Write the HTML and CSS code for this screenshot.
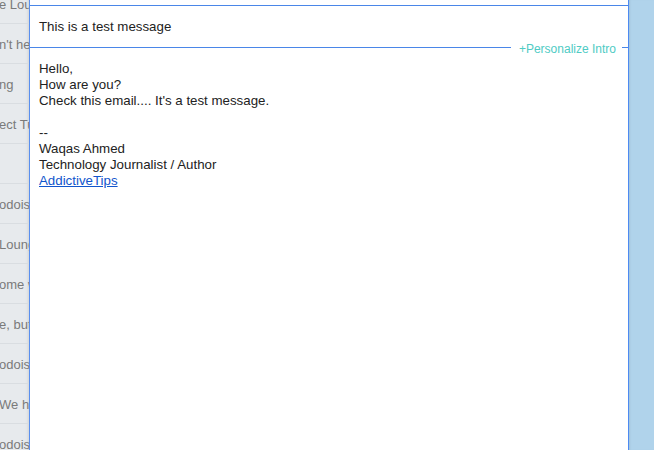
FILE: index.html
```html
<!DOCTYPE html>
<html lang="en">
<head>
<meta charset="utf-8">
<title>Compose</title>
<link rel="stylesheet" href="styles.css">
</head>
<body>
<div class="page">
  <div class="inbox">
    <div class="row first">e Lounge</div>
    <div class="row">n't hear</div>
    <div class="row">ng</div>
    <div class="row">ect Tuesday</div>
    <div class="row"></div>
    <div class="row">odoist</div>
    <div class="row">Lounge</div>
    <div class="row">ome we</div>
    <div class="row">e, but</div>
    <div class="row">odoist</div>
    <div class="row">We have</div>
    <div class="row">odoist</div>
  </div>
  <div class="compose">
    <div class="subject">This is a test message</div>
    <div class="divider">
      <span class="rule grow"></span>
      <span class="personalize">+Personalize Intro</span>
      <span class="rule tail"></span>
    </div>
    <div class="message">
      <div>Hello,</div>
      <div>How are you?</div>
      <div>Check this email.... It's a test message.</div>
      <div class="blank"></div>
      <div>--</div>
      <div>Waqas Ahmed</div>
      <div>Technology Journalist / Author</div>
      <div><a class="link" href="#">AddictiveTips</a></div>
    </div>
  </div>
  <div class="side"></div>
</div>
</body>
</html>
```

FILE: styles.css
```css
* { box-sizing: border-box; }
html, body {
  margin: 0;
  padding: 0;
  height: 100%;
  overflow: hidden;
  background: #ffffff;
}
body {
  font-family: "Liberation Sans", Arial, sans-serif;
  font-size: 13.3px;
  color: #222222;
}
.page {
  display: flex;
  height: 450px;
  width: 654px;
}
.inbox {
  width: 29px;
  flex: none;
  background: #e7eaed;
  overflow: hidden;
  box-shadow: inset -3px 0 3px -2px rgba(0,0,0,0.10);
}
.row {
  height: 40px;
  border-bottom: 1px solid #d9dde1;
  white-space: nowrap;
  color: #7a7a7a;
  font-size: 13px;
  line-height: 40px;
  padding-top: 1px;
  text-indent: -1px;
  overflow: hidden;
}
.row.first { margin-top: -16px; }
.compose {
  width: 600px;
  flex: none;
  border-left: 1px solid #5a8fee;
  border-right: 1px solid #4d8af2;
  background: #ffffff;
  padding-top: 5px;
  display: flex;
  flex-direction: column;
}
.subject {
  border-top: 1px solid #4a86e8;
  height: 42px;
  line-height: 41px;
  padding-left: 9px;
  font-size: 13.3px;
  color: #222222;
}
.divider {
  display: flex;
  align-items: center;
  height: 1px;
}
.rule {
  height: 1px;
  background: #4a86e8;
}
.rule.grow { flex: 1; }
.rule.tail { width: 6px; flex: none; }
.personalize {
  font-size: 12px;
  line-height: 14px;
  padding: 2px 6px 0 8px;
  color: #4fcbc4;
  white-space: nowrap;
}
.message {
  padding: 13px 9px 0;
  line-height: 16px;
  font-size: 13.3px;
  color: #222222;
}
.blank { height: 16px; }
.link {
  color: #1155cc;
  text-decoration: underline;
}
.side {
  flex: 1;
  background: #b0d3eb;
  box-shadow: inset 2px 0 2px -1px rgba(0,0,0,0.08);
}
```
